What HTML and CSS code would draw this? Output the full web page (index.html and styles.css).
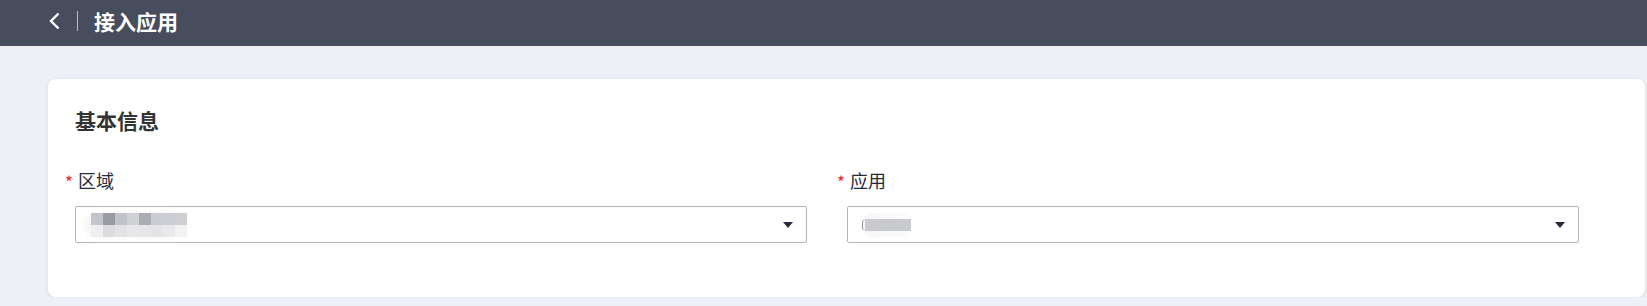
FILE: index.html
```html
<!DOCTYPE html>
<html lang="zh">
<head>
<meta charset="utf-8">
<title>接入应用</title>
<link rel="stylesheet" href="styles.css">
</head>
<body>
<header class="topbar">
  <svg class="back" width="13" height="18" viewBox="0 0 13 18"><polyline points="10.5,1.5 3,9 10.5,16.5" fill="none" stroke="#ffffff" stroke-width="2.4" stroke-linejoin="miter"/></svg>
  <span class="divider"></span>
  <h1 class="title">接入应用</h1>
</header>
<main class="page">
  <section class="card">
    <h2 class="card-title">基本信息</h2>
    <div class="form-grid">
      <div class="form-item">
        <label class="label"><span class="req">*</span>区域</label>
        <div class="select">
          <div class="mosaic">
            <div class="mrow">
              <i style="background:#c4c5ca"></i><i style="background:#999ba3"></i><i style="background:#c2c3c8"></i><i style="background:#d1d2d6"></i><i style="background:#abacb3"></i><i style="background:#cccdd2"></i><i style="background:#cdced3"></i><i style="background:#cfd0d4"></i>
            </div>
            <div class="mrow">
              <i style="background:#efeff1"></i><i style="background:#dddde0"></i><i style="background:#e3e3e6"></i><i style="background:#e8e8ea"></i><i style="background:#e6e6e9"></i><i style="background:#e5e5e8"></i><i style="background:#e9e9eb"></i><i style="background:#f3f3f4"></i>
            </div>
          </div>
          <span class="caret"></span>
        </div>
      </div>
      <div class="form-item">
        <label class="label"><span class="req">*</span>应用</label>
        <div class="select">
          <div class="blur2"><span class="paren"></span><span class="bar"></span></div>
          <span class="caret"></span>
        </div>
      </div>
    </div>
  </section>
</main>
</body>
</html>
```
FILE: styles.css
```css
* { box-sizing: border-box; }
body {
  margin: 0;
  background: #eef0f5;
  font-family: "Noto Sans CJK SC", "Noto Sans", sans-serif;
  color: #252b3a;
}
.topbar {
  height: 46px;
  background: #474d5c;
  display: flex;
  align-items: center;
  padding: 0 0 4px 48px;
}
.back { display: block; }
.divider {
  width: 1px;
  height: 20px;
  background: #b9bcc4;
  margin-left: 16px;
}
.title {
  margin: 0 0 0 16px;
  font-size: 21px;
  line-height: 28px;
  font-weight: 700;
  color: #ffffff;
}
.page {
  padding: 33px 2px 0 48px;
}
.card {
  background: #ffffff;
  border-radius: 8px;
  box-shadow: 0 1px 4px rgba(30, 40, 70, 0.1);
  padding: 27px 26px 54px 27px;
}
.card-title {
  margin: 0;
  font-size: 21px;
  line-height: 28px;
  font-weight: 700;
  color: #333333;
}
.form-grid {
  display: grid;
  grid-template-columns: 1fr 1fr;
  margin-top: 34px;
}
.form-item {
  padding-right: 40px;
}
.label {
  display: flex;
  align-items: center;
  margin-left: -10px;
  font-size: 18px;
  line-height: 24px;
  color: #252b3a;
}
.req {
  color: #f5222d;
  font-size: 17px;
  width: 13px;
  line-height: 17px;
  margin-top: 2px;
}
.select {
  margin-top: 14px;
  height: 37px;
  border: 1px solid #b4b5bb;
  border-radius: 2px;
  display: flex;
  align-items: center;
  justify-content: space-between;
  padding: 0 13px 0 15px;
}
.mosaic {
  display: flex;
  flex-direction: column;
  margin-top: 1px;
  border-radius: 12px;
  box-shadow: -6px 0 6px #f4f4f5;
}
.mrow { display: flex; }
.mrow i {
  display: block;
  width: 12px;
  height: 12px;
}
.blur2 {
  display: flex;
  align-items: center;
  height: 24px;
  padding: 0 4px 0 0;
  margin-left: -2px;
  border-radius: 12px;
  background: linear-gradient(90deg, #f7f7f8, #fafafa 80%, #ffffff);
}
.paren {
  width: 3px;
  height: 10px;
  border-left: 1.5px solid #8a8c93;
  border-radius: 4px 0 0 4px;
  margin-left: 1px;
}
.bar {
  width: 46px;
  height: 12px;
  background: #c9cacd;
}
.caret {
  width: 0;
  height: 0;
  border-left: 5.5px solid transparent;
  border-right: 5.5px solid transparent;
  border-top: 6px solid #252b3a;
}
```
